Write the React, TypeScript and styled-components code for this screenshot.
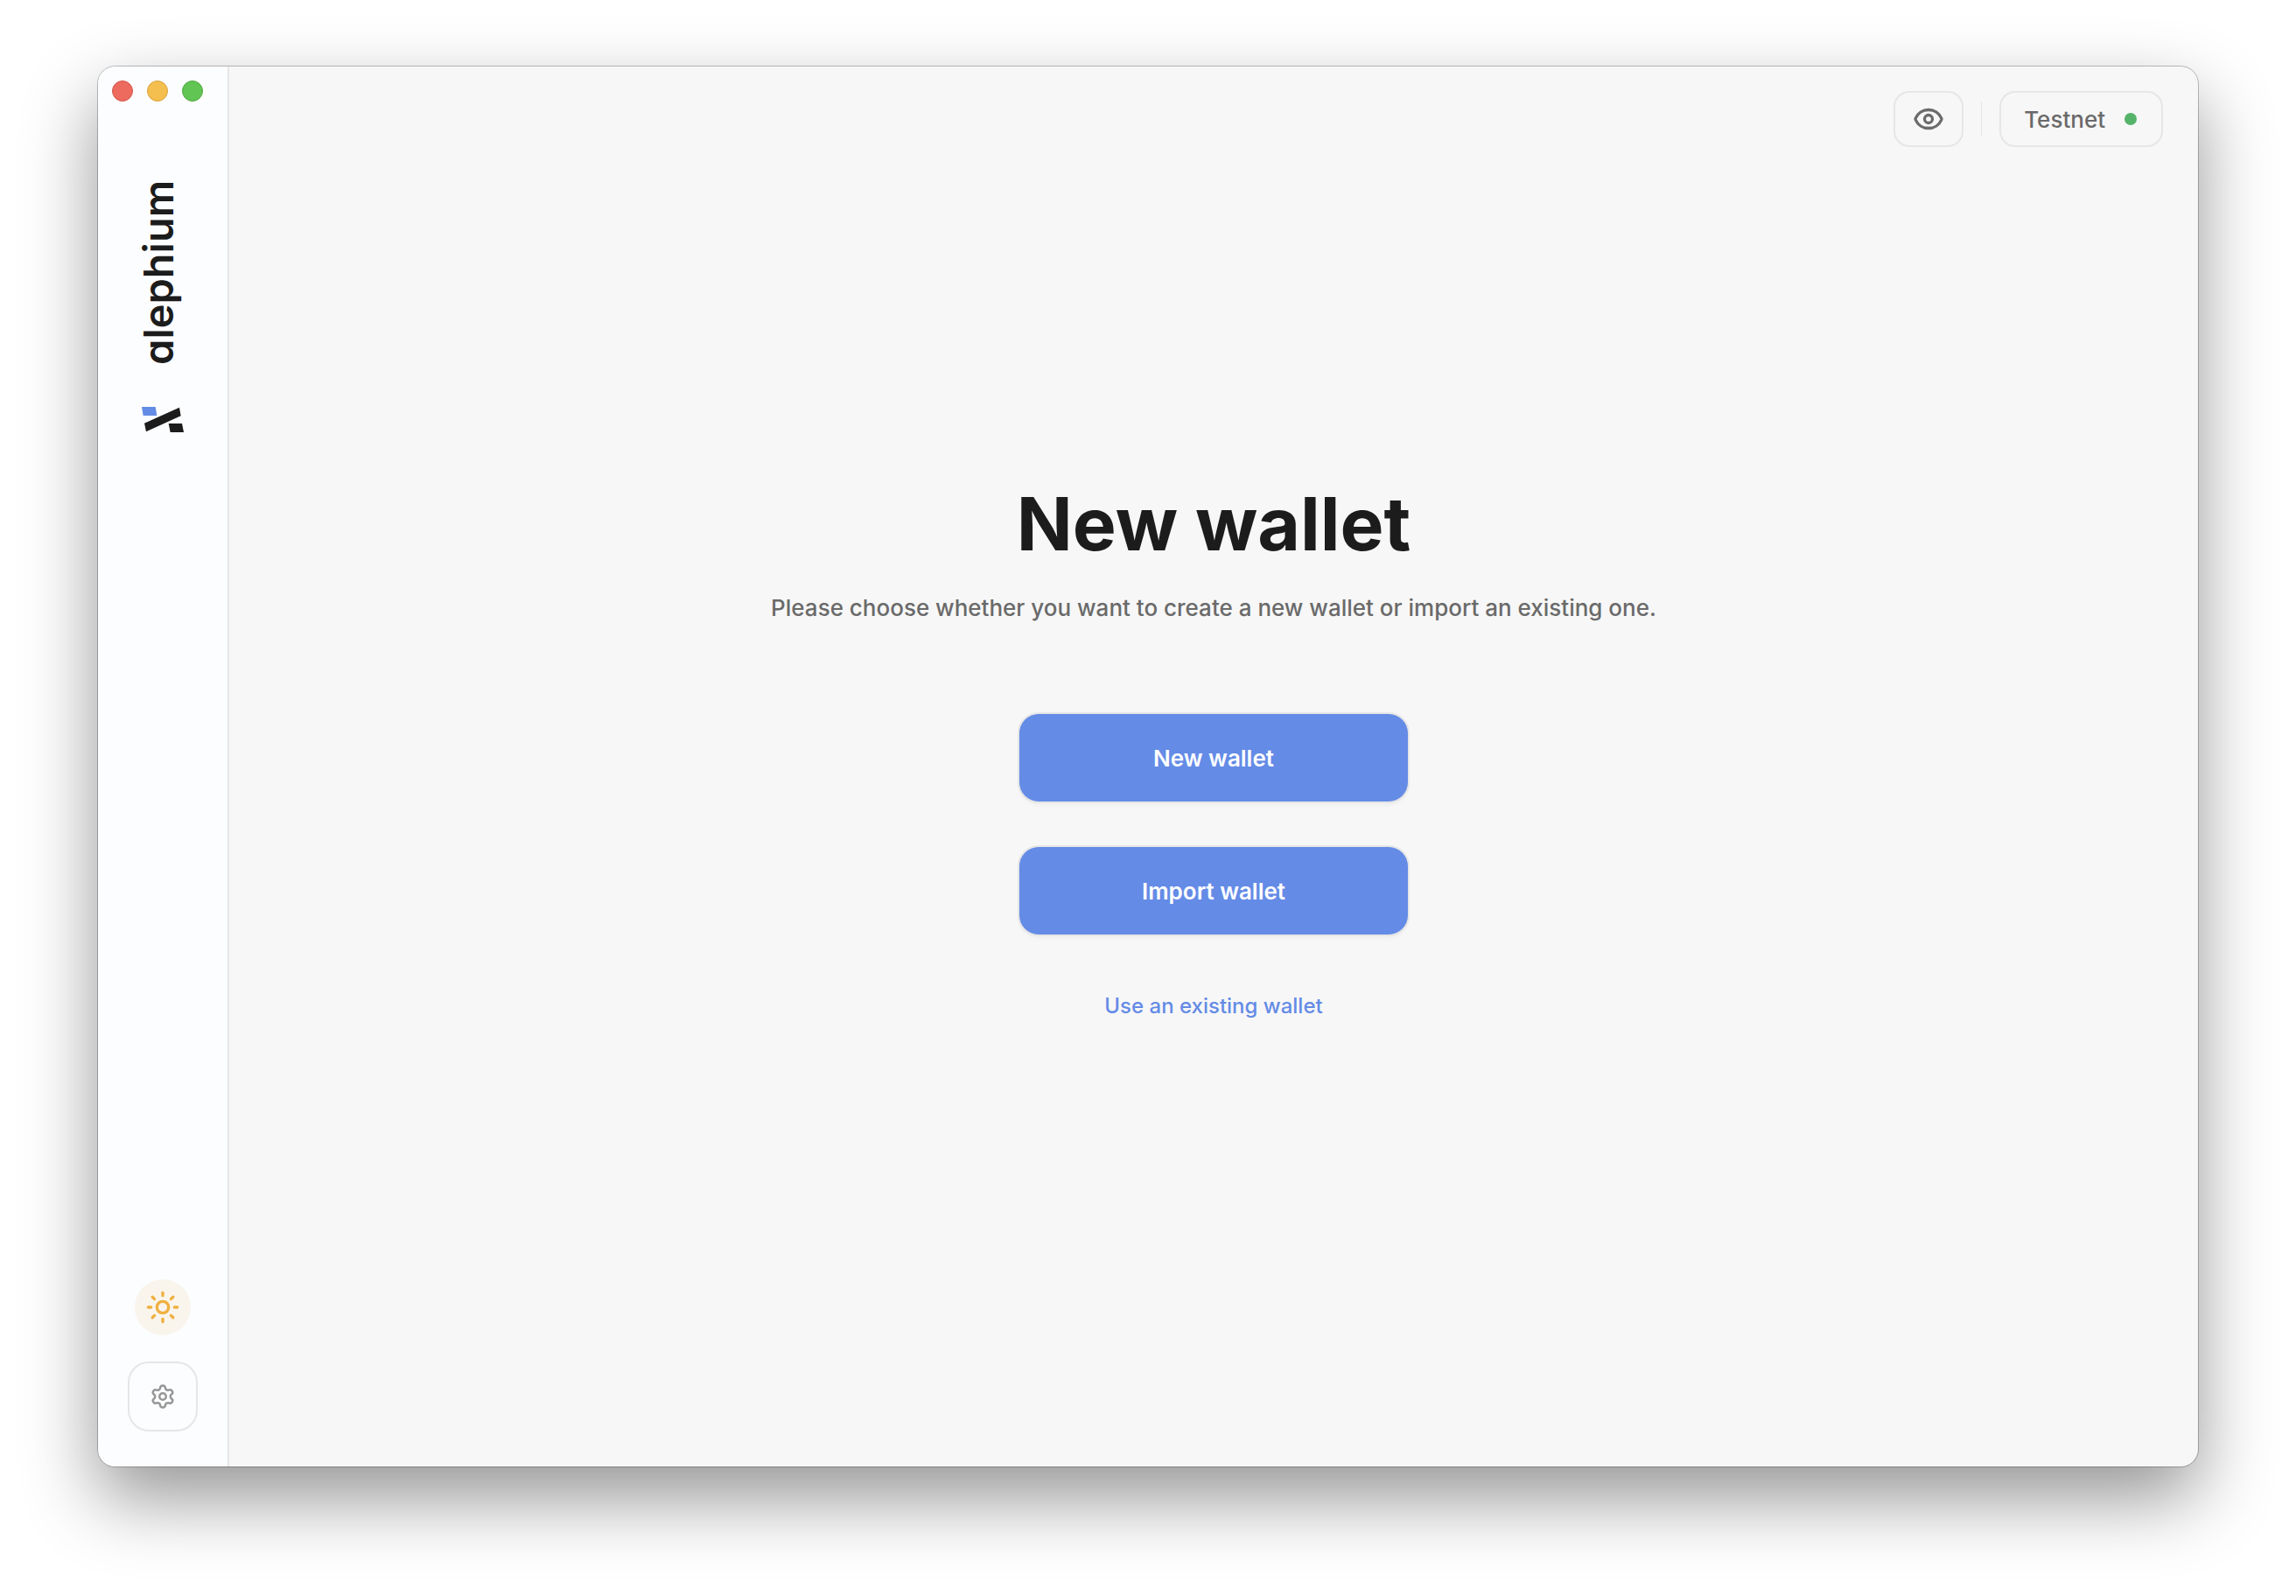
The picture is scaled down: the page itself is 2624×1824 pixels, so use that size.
import React from "react";
import styled, { createGlobalStyle } from "styled-components";
import { Eye, Settings, Sun } from "lucide-react";

const GlobalStyle = createGlobalStyle`
  *, *::before, *::after { box-sizing: border-box; }
  body {
    margin: 0;
    background: #ffffff;
    color: #1c1c1c;
    font-family: Inter, "Liberation Sans", sans-serif;
  }
  h1, p { margin: 0; }
  button { font-family: inherit; cursor: pointer; }
`;

const Desktop = styled.div`
  display: flex;
  min-height: 100vh;
  padding: 76px 112px 148px;
`;

const AppWindow = styled.div`
  display: flex;
  flex: 1;
  overflow: hidden;
  border-radius: 20px;
  background: #f7f7f7;
  box-shadow: 0 0 0 1px rgba(0, 0, 0, 0.24), 0 36px 84px rgba(0, 0, 0, 0.42);
`;

const Sidebar = styled.aside`
  display: flex;
  flex-direction: column;
  align-items: center;
  width: 150px;
  padding: 16px 0 40px;
  border-right: 2px solid #e6e6e6;
  background: #fcfdff;
`;

const TrafficLights = styled.div`
  display: flex;
  align-self: flex-start;
  gap: 16px;
  padding-left: 16px;
`;

const TrafficLight = styled.button<{ $fill: string; $edge: string }>`
  width: 24px;
  height: 24px;
  padding: 0;
  border: 1px solid ${({ $edge }) => $edge};
  border-radius: 50%;
  background: ${({ $fill }) => $fill};
`;

const Brand = styled.div`
  display: flex;
  flex-direction: column;
  align-items: flex-start;
  gap: 48px;
  margin-top: 90px;
`;

const Wordmark = styled.span`
  writing-mode: vertical-rl;
  transform: rotate(180deg);
  font-size: 47px;
  line-height: 38px;
  font-weight: 600;
  font-feature-settings: "cv11";
`;

const SidebarActions = styled.div`
  display: flex;
  flex-direction: column;
  align-items: center;
  gap: 30px;
  margin-top: auto;
`;

const ThemeButton = styled.button`
  display: grid;
  place-items: center;
  width: 64px;
  height: 64px;
  padding: 0;
  border: 0;
  border-radius: 50%;
  background: #f9f5ed;
  color: #f0b040;
`;

const OutlineButton = styled.button<{ $square?: boolean }>`
  display: flex;
  align-items: center;
  justify-content: center;
  min-width: 80px;
  height: ${({ $square }) => ($square ? 80 : 64)}px;
  padding: 0;
  border: 2px solid #e6e6e6;
  border-radius: ${({ $square }) => ($square ? 24 : 18)}px;
  background: transparent;
  color: ${({ $square }) => ($square ? "#979797" : "#6a6a6a")};
`;

const NetworkButton = styled(OutlineButton)`
  gap: 22px;
  padding: 0 28px 0 26px;
  font-size: 26px;
  line-height: 36px;
  font-weight: 500;
`;

const ButtonLabel = styled.span`
  padding-top: 2px;
`;

const StatusDot = styled.span`
  width: 14px;
  height: 14px;
  border-radius: 50%;
  background: #56b36a;
`;

const Main = styled.main`
  display: flex;
  flex: 1;
  flex-direction: column;
`;

const Toolbar = styled.header`
  display: flex;
  align-items: center;
  justify-content: flex-end;
  gap: 20px;
  padding: 28px 40px 0;
`;

const Divider = styled.span`
  width: 1px;
  height: 40px;
  background: #e6e6e6;
`;

const Content = styled.section`
  display: flex;
  flex: 1;
  flex-direction: column;
  align-items: center;
  justify-content: center;
  padding-bottom: 130px;
`;

const Title = styled.h1`
  font-size: 84px;
  line-height: 102px;
  font-weight: 700;
`;

const Subtitle = styled.p`
  margin-top: 26px;
  color: #6a6a6a;
  font-size: 26px;
  line-height: 38px;
  font-weight: 500;
`;

const Actions = styled.div`
  display: flex;
  flex-direction: column;
  gap: 52px;
  width: 444px;
  margin: 102px 0 66px;
`;

const PrimaryButton = styled.button`
  height: 100px;
  border: 0;
  border-radius: 22px;
  background: #648be6;
  box-shadow: 0 0 0 2px #e6e6e6, 0 4px 4px rgba(0, 0, 0, 0.04);
  color: #ffffff;
  font-size: 26px;
  line-height: 36px;
  font-weight: 600;
  padding: 2px 0 0;
`;

const TextLink = styled.a`
  color: #648be6;
  font-size: 24px;
  line-height: 32px;
  font-weight: 500;
  text-decoration: none;
`;

const BrandMark = () => (
  <svg width="48" height="29" viewBox="0 0 144 87" aria-hidden="true">
    <path d="M0 0H47L52 30H5Z" fill="#648be6" />
    <path d="M9 56L129 2L134 31L15 85Z" fill="#1c1c1c" />
    <path d="M92 57H138L144 87H98Z" fill="#1c1c1c" />
  </svg>
);

export default function App() {
  return (
    <>
      <GlobalStyle />
      <Desktop>
        <AppWindow>
          <Sidebar>
            <TrafficLights>
              <TrafficLight $fill="#ec6a5e" $edge="#d5564b" aria-label="Close" />
              <TrafficLight $fill="#f4bf4f" $edge="#d8a13e" aria-label="Minimize" />
              <TrafficLight $fill="#61c554" $edge="#51a73e" aria-label="Zoom" />
            </TrafficLights>
            <Brand>
              <Wordmark>alephium</Wordmark>
              <BrandMark />
            </Brand>
            <SidebarActions>
              <ThemeButton aria-label="Switch theme">
                <Sun size={40} />
              </ThemeButton>
              <OutlineButton $square aria-label="Settings">
                <Settings size={30} />
              </OutlineButton>
            </SidebarActions>
          </Sidebar>
          <Main>
            <Toolbar>
              <OutlineButton aria-label="Toggle discreet mode">
                <Eye size={36} strokeWidth={2.2} />
              </OutlineButton>
              <Divider />
              <NetworkButton>
                <ButtonLabel>Testnet</ButtonLabel>
                <StatusDot />
              </NetworkButton>
            </Toolbar>
            <Content>
              <Title>New wallet</Title>
              <Subtitle>
                Please choose whether you want to create a new wallet or import an existing one.
              </Subtitle>
              <Actions>
                <PrimaryButton>New wallet</PrimaryButton>
                <PrimaryButton>Import wallet</PrimaryButton>
              </Actions>
              <TextLink href="#wallets">Use an existing wallet</TextLink>
            </Content>
          </Main>
        </AppWindow>
      </Desktop>
    </>
  );
}
